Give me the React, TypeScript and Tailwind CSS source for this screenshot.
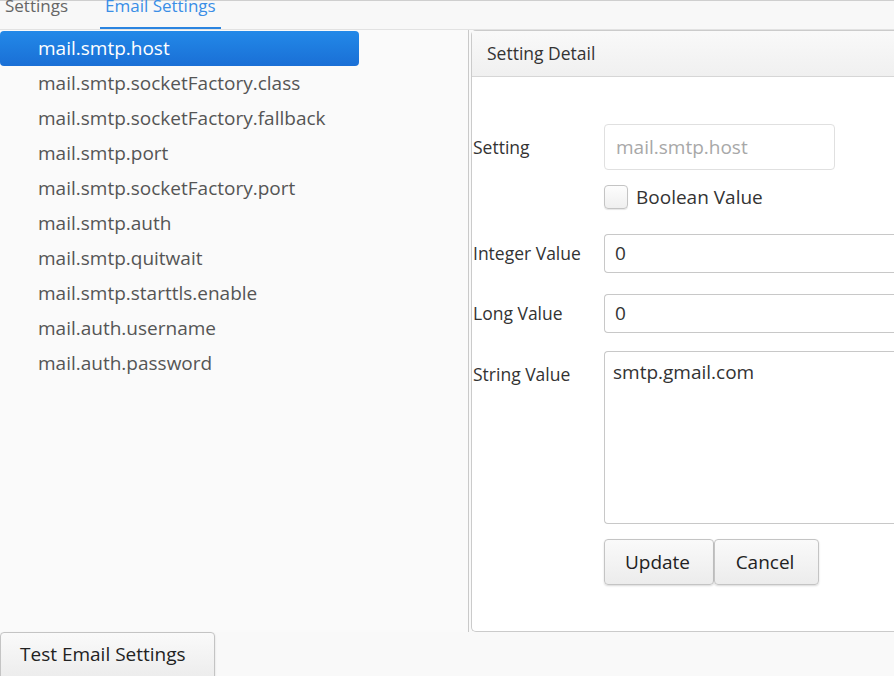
import React from "react";

const settings = [
  "mail.smtp.host",
  "mail.smtp.socketFactory.class",
  "mail.smtp.socketFactory.fallback",
  "mail.smtp.port",
  "mail.smtp.socketFactory.port",
  "mail.smtp.auth",
  "mail.smtp.quitwait",
  "mail.smtp.starttls.enable",
  "mail.auth.username",
  "mail.auth.password",
];

const btn =
  "rounded-[4px] border border-[#c4c4c4] bg-gradient-to-b from-[#fafafa] to-[#ececec] text-[19px] text-[#222] shadow-[0_1px_2px_rgba(0,0,0,0.15)]";

function Tabs() {
  return (
    <div className="relative h-[30px] shrink-0 border-t border-[#cfcfcf] border-b border-b-[#e2e2e2] bg-[#f8f8f8]">
      <div className="flex h-full items-end text-[17px] leading-none">
        <div className="w-[100px] pl-[5px] pb-[15px] text-[#666]">Settings</div>
        <div className="border-b-2 border-[#2b84e0] px-[5px] pb-[13px] text-[#3a8ee6]">Email Settings</div>
      </div>
    </div>
  );
}

function SettingList() {
  return (
    <ul className="h-full w-[469px] shrink-0 border-r border-[#c9c9c9] bg-[#fafafa] pt-px">
      {settings.map((s, i) => (
        <li
          key={s}
          className={
            i === 0
              ? "flex h-[35px] w-[359px] items-center rounded-[4px] bg-gradient-to-b from-[#2389e8] to-[#1a6fd6] pl-[38px] text-[19px] text-white"
              : "flex h-[35px] items-center pl-[38px] text-[19px] text-[#555]"
          }
        >
          {s}
        </li>
      ))}
    </ul>
  );
}

function Detail() {
  return (
    <div className="ml-[2px] w-[500px] shrink-0 rounded-l-[5px] border border-r-0 border-[#cbcbcb] bg-white">
      <div className="flex h-[46px] items-center border-b border-[#d6d6d6] bg-gradient-to-b from-[#f9f9f9] to-[#f0f0f0] pl-[15px] text-[17.5px] text-[#333]">
        Setting Detail
      </div>
      <div className="grid grid-cols-[131px_1fr] items-start pl-[1px] pt-[47px] text-[17.5px] text-[#333]">
        <div className="flex h-[46px] items-center">Setting</div>
        <div className="flex h-[46px] w-[231px] items-center rounded-[4px] border border-[#e0e0e0] px-[11px] text-[19px] text-[#a8a8a8]">
          mail.smtp.host
        </div>

        <div />
        <label className="mt-[15px] flex h-[24px] items-center gap-[8px] text-[19px] text-[#333]">
          <span className="h-[24px] w-[24px] rounded-[4px] border border-[#c4c4c4] bg-gradient-to-b from-[#fdfdfd] to-[#efefef] shadow-[0_1px_1px_rgba(0,0,0,0.1)]" />
          Boolean Value
        </label>

        <div className="mt-[25px] flex h-[39px] items-center">Integer Value</div>
        <div className="mt-[25px] flex h-[39px] items-center rounded-l-[4px] border border-r-0 border-[#c8c8c8] px-[10px] text-[19px]">
          0
        </div>

        <div className="mt-[21px] flex h-[39px] items-center">Long Value</div>
        <div className="mt-[21px] flex h-[39px] items-center rounded-l-[4px] border border-r-0 border-[#c8c8c8] px-[10px] text-[19px]">
          0
        </div>

        <div className="mt-[18px] pt-[10px]">String Value</div>
        <div className="mt-[18px] h-[173px] rounded-l-[4px] border border-r-0 border-[#c8c8c8] px-[8px] pt-[6px] text-[19px]">
          smtp.gmail.com
        </div>

        <div />
        <div className="mt-[15px] flex">
          <button className={`${btn} h-[46px] w-[110px] pr-[3px]`}>Update</button>
          <button className={`${btn} h-[46px] w-[105px] pr-[3px]`}>Cancel</button>
        </div>
      </div>
    </div>
  );
}

export default function App() {
  return (
    <div className="flex h-[676px] w-[894px] flex-col overflow-hidden bg-[#f9f9f9] font-['Open_Sans',sans-serif]">
      <Tabs />
      <div className="flex h-[602px] shrink-0 overflow-hidden">
        <SettingList />
        <Detail />
      </div>
      <div className="shrink-0">
        <button className={`${btn} h-[48px] w-[215px] rounded-b-none pb-[3px] pl-[19px] text-left`}>
          Test Email Settings
        </button>
      </div>
    </div>
  );
}
